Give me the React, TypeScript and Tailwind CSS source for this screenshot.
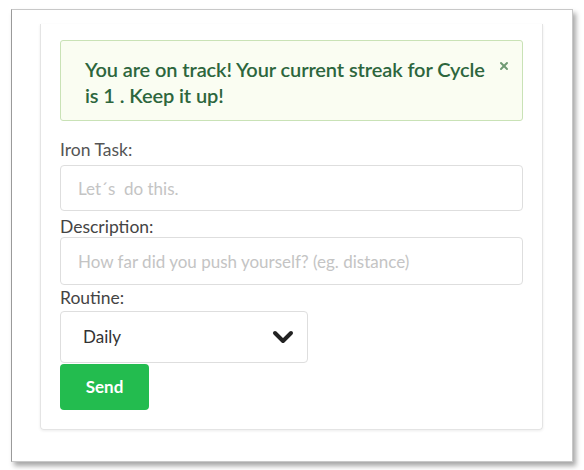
import { ChevronDown, X } from "lucide-react";

export default function App() {
  return (
    <div className="w-[584px] h-[470px] bg-white pt-[9px] pl-[11px] font-['Lato','Liberation_Sans',sans-serif]">
      <div className="w-[562px] h-[453px] bg-white border border-[#c8c8c8] border-l-[#9a9a9a] shadow-[3px_4px_5px_rgba(0,0,0,0.35)] pt-[14px] pl-[28px]">
        <div className="w-[503px] h-[406px] border-x border-b border-[#e4e4e4] rounded-b-[4px] shadow-[0_1px_3px_rgba(0,0,0,0.08)] px-[19px] pt-[16px]">
          {/* streak alert */}
          <div className="relative h-[81px] bg-[#fafdf2] border border-[#c9e2b6] rounded-[3px] pl-[24px] pr-[24px] pt-[15px] text-[20px] leading-[26px] font-semibold text-[#2d663d] tracking-[-0.1px]">
            <p>You are on track! Your current streak for Cycle is 1 . Keep it up!</p>
            <X className="absolute right-[12px] top-[19px] text-[#6f9a74]" size={12} strokeWidth={4} />
          </div>

          <label className="block mt-[19px] h-[20px] leading-[20px] text-[17.5px] text-[#555]">Iron Task:</label>
          <input
            className="mt-[5px] w-full h-[46px] border border-[#dedede] rounded-[4px] px-[17px] text-[17px] placeholder:text-[#c4c4c4] outline-none"
            placeholder="Let´s  do this."
          />

          <label className="block mt-[6px] h-[20px] leading-[20px] text-[17.5px] text-[#444]">Description:</label>
          <input
            className="w-full h-[48px] border border-[#dedede] rounded-[4px] px-[17px] text-[17px] placeholder:text-[#c4c4c4] outline-none"
            placeholder="How far did you push yourself? (eg. distance)"
          />

          <label className="block mt-[3px] h-[20px] leading-[20px] text-[17.5px] text-[#444]">Routine:</label>
          <div className="mt-[3px] w-[248px] h-[52px] border border-[#dedede] rounded-[4px] flex items-center justify-between pl-[22px] pr-[8px] text-[17px] text-[#333]">
            <span>Daily</span>
            <ChevronDown size={32} strokeWidth={3} className="text-[#222]" />
          </div>

          <button className="mt-[1px] w-[89px] h-[46px] rounded-[4px] bg-[#23bc4f] text-white text-[17px] font-bold">
            Send
          </button>
        </div>
      </div>
    </div>
  );
}
